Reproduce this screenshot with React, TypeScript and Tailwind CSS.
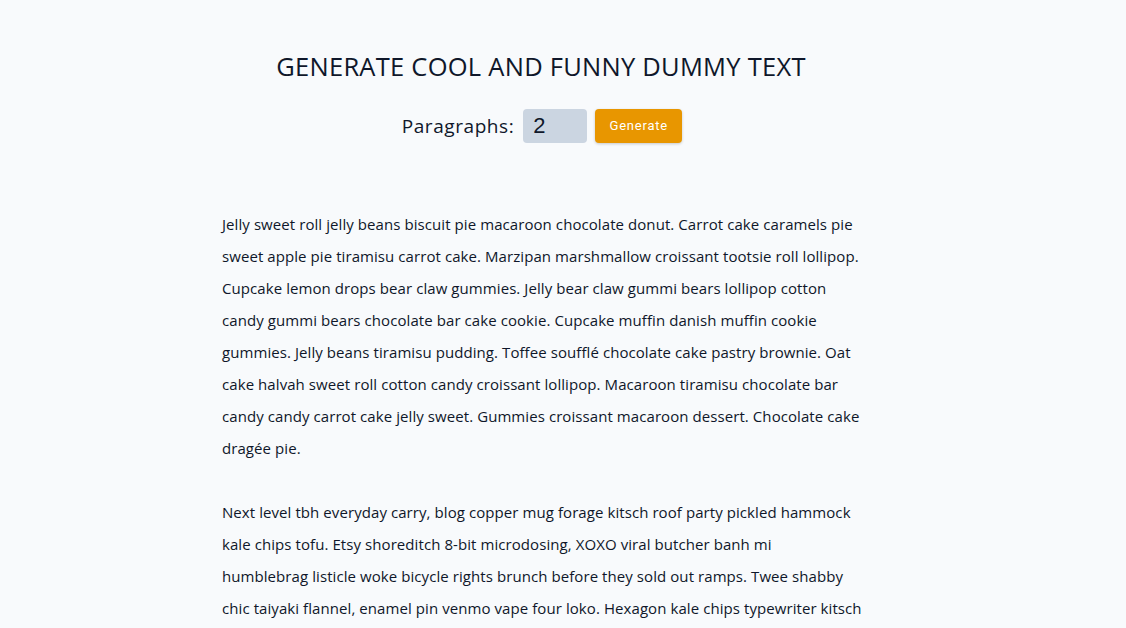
import React, { useState } from 'react';

const paragraphs: React.ReactNode[] = [
  'Jelly sweet roll jelly beans biscuit pie macaroon chocolate donut. Carrot cake caramels pie sweet apple pie tiramisu carrot cake. Marzipan marshmallow croissant tootsie roll lollipop. Cupcake lemon drops bear claw gummies. Jelly bear claw gummi bears lollipop cotton candy gummi bears chocolate bar cake cookie. Cupcake muffin danish muffin cookie gummies. Jelly beans tiramisu pudding. Toffee soufflé chocolate cake pastry brownie. Oat cake halvah sweet roll cotton candy croissant lollipop. Macaroon tiramisu chocolate bar candy candy carrot cake jelly sweet. Gummies croissant macaroon dessert. Chocolate cake dragée pie.',
  <>
    Next level tbh everyday carry, blog copper mug forage kitsch roof party pickled hammock kale chips tofu. Etsy shoreditch 8-bit microdosing, XOXO viral butcher banh mi
    <br />
    humblebrag listicle woke bicycle rights brunch before they sold out ramps. Twee shabby chic taiyaki flannel, enamel pin venmo vape four loko. Hexagon kale chips typewriter kitsch 8-bit organic plaid small batch keffiyeh ethical banh mi narwhal echo park cronut.
  </>,
  'Zombie ipsum reversus ab viral inferno, nam rick grimes malum cerebro. De carne lumbering animata corpora quaeritis. Summus brains sit, morbo vel maleficia? De apocalypsi gorger omero undead survivor dictum mauris.',
];

export default function App() {
  const [count, setCount] = useState(2);

  return (
    <div className="min-h-screen bg-[#f8fafc] font-['Open_Sans',sans-serif] text-[#0f172a]">
      <div className="pr-[44px]">
        <section className="mx-auto w-[638px] pt-[49px]">
          <h3 className="text-center text-[25.5px] leading-[34px] tracking-[0.01em] uppercase">
            Generate cool and funny dummy text
          </h3>
          <form
            className="mt-[26px] flex items-center justify-center pl-[2px]"
            onSubmit={(e) => e.preventDefault()}
          >
            <label htmlFor="amount" className="text-[19px] tracking-[0.03em]">
              Paragraphs:
            </label>
            <input
              id="amount"
              type="number"
              value={count}
              onChange={(e) => setCount(Number(e.target.value))}
              className="ml-[9px] h-[34px] w-[64px] rounded-[4px] bg-[#cbd5e1] px-[10px] font-['Liberation_Sans',sans-serif] text-[22px] outline-none [appearance:textfield]"
            />
            <button
              type="submit"
              className="ml-[8px] h-[34px] w-[87px] rounded-[4px] bg-[#e89600] font-['Roboto',sans-serif] text-[13px] tracking-[0.06em] text-white shadow-[0_1px_3px_rgba(0,0,0,0.2)]"
            >
              Generate
            </button>
          </form>
          <article className="mt-[65px] mr-[-6px]">
            {paragraphs.slice(0, Math.max(1, count + 1)).map((p, i) => (
              <p key={i} className="mb-[32px] text-[15px] leading-[32px] tracking-[0.005em]">
                {p}
              </p>
            ))}
          </article>
        </section>
      </div>
    </div>
  );
}
